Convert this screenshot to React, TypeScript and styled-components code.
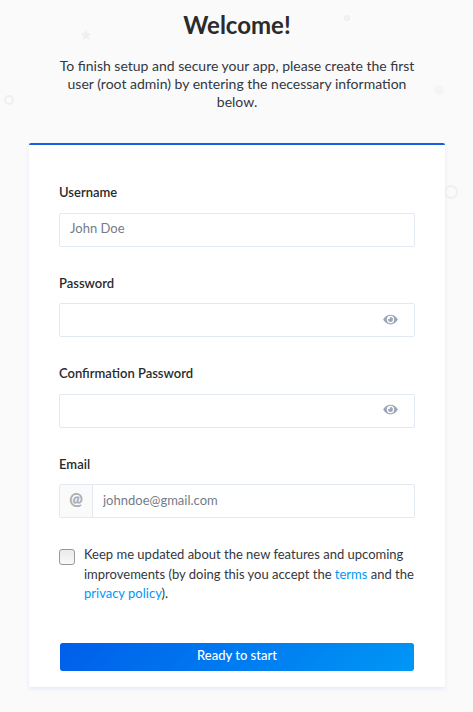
import React from "react";
import styled, { createGlobalStyle } from "styled-components";
import { FaEye } from "react-icons/fa";

const GlobalStyle = createGlobalStyle`
  *, *::before, *::after { box-sizing: border-box; }
  body {
    margin: 0;
    background: #fafafb;
    color: #333740;
    font-family: Lato, "Open Sans", sans-serif;
    font-size: 13px;
    line-height: 1.5;
  }
`;

const Page = styled.main`
  position: relative;
  display: flex;
  flex-direction: column;
  align-items: center;
  min-height: 100vh;
  padding: 7px 16px 24px 17px;
  overflow: hidden;
`;

const Decoration = styled.svg<{ $top: number; $left: number }>`
  position: absolute;
  top: ${(p) => p.$top}px;
  left: ${(p) => p.$left}px;
`;

const Header = styled.header`
  position: relative;
  width: 100%;
  max-width: 356px;
  text-align: center;
`;

const Title = styled.h1`
  margin: 0 0 14px;
  font-size: 24px;
  line-height: 36px;
  font-weight: 700;
  color: #292b2c;
`;

const Subtitle = styled.p`
  margin: 0;
  font-size: 14px;
  line-height: 18px;
  color: #333740;
`;

const Card = styled.form`
  position: relative;
  width: 100%;
  max-width: 416px;
  margin-top: 32px;
  padding: 38px 30px 15px;
  background: #fff;
  border-top: 2px solid #1c5de7;
  border-radius: 2px;
  box-shadow: 0 2px 4px #e3e9f3;
`;

const Field = styled.div`
  display: flex;
  flex-direction: column;
  margin-bottom: 27px;
`;

const Label = styled.label`
  margin-bottom: 10px;
  font-weight: 600;
  color: #292b2c;
`;

const Control = styled.div`
  display: flex;
  height: 34px;
  overflow: hidden;
  background: #fff;
  border: 1px solid #e3e9f3;
  border-radius: 2px;
  &:focus-within { border-color: #78caff; }
`;

const Addon = styled.span`
  display: flex;
  align-items: center;
  justify-content: center;
  width: 33px;
  padding-bottom: 4px;
  background: #fafafb;
  border-right: 1px solid #e3e9f3;
  color: #aaafb5;
  font-size: 16px;
  font-weight: 800;
`;

const Input = styled.input`
  flex: 1;
  min-width: 0;
  padding: 0 10px 3px;
  border: 0;
  outline: 0;
  background: transparent;
  color: #333740;
  font-family: inherit;
  font-size: 13px;
  &::placeholder { color: #757c87; opacity: 1; }
`;

const Reveal = styled.button`
  display: flex;
  align-items: center;
  justify-content: center;
  width: 48px;
  padding: 0 0 2px;
  border: 0;
  background: transparent;
  color: #9ea7b8;
  cursor: pointer;
  svg { width: 15px; height: 13px; }
`;

const Consent = styled.div`
  display: flex;
  align-items: flex-start;
  gap: 9px;
`;

const Checkbox = styled.input`
  flex: none;
  appearance: none;
  width: 16px;
  height: 16px;
  margin: 4px 0 0;
  border: 1px solid #999892;
  border-radius: 3px;
  background: linear-gradient(#eaeaea, #f9f9f9);
  &:checked { background: #1c5de7; }
`;

const ConsentLabel = styled.label`
  color: #333740;
`;

const Link = styled.a`
  color: #0097f7;
  text-decoration: none;
`;

const Submit = styled.button`
  display: block;
  width: 100%;
  height: 30px;
  margin-top: 38px;
  padding: 0 0 3px;
  border: 1px solid #fff;
  border-radius: 3px;
  background: linear-gradient(315deg, #0097f6 0%, #005eea 100%) padding-box;
  color: #fff;
  font-family: inherit;
  font-size: 13px;
  font-weight: 500;
  cursor: pointer;
`;

type TextFieldProps = {
  id: string;
  label: string;
  type: string;
  placeholder?: string;
  addon?: string;
};

function TextField({ id, label, type, placeholder, addon }: TextFieldProps) {
  const [shown, setShown] = React.useState(false);
  const secret = type === "password";
  return (
    <Field>
      <Label htmlFor={id}>{label}</Label>
      <Control>
        {addon && <Addon>{addon}</Addon>}
        <Input id={id} name={id} type={shown ? "text" : type} placeholder={placeholder} />
        {secret && (
          <Reveal type="button" aria-label={`Show ${label}`} onClick={() => setShown(!shown)}>
            <FaEye />
          </Reveal>
        )}
      </Control>
    </Field>
  );
}

export default function App() {
  return (
    <>
      <GlobalStyle />
      <Page>
        <Decoration $top={29} $left={80} width="12" height="12" viewBox="0 0 12 12" aria-hidden="true">
          <path d="M6 .5 7.6 4l3.9.4-2.9 2.6.8 3.9L6 9l-3.4 1.9.8-3.9L.5 4.4 4.4 4z" fill="#efeff0" />
        </Decoration>
        <Decoration $top={95} $left={4} width="10" height="10" viewBox="0 0 10 10" aria-hidden="true">
          <circle cx="5" cy="5" r="4" fill="none" stroke="#efeff0" strokeWidth="2" />
        </Decoration>
        <Decoration $top={15} $left={344} width="6" height="6" viewBox="0 0 6 6" aria-hidden="true">
          <circle cx="3" cy="3" r="2" fill="none" stroke="#efeff0" strokeWidth="2" />
        </Decoration>
        <Decoration $top={85} $left={434} width="10" height="10" viewBox="0 0 10 10" aria-hidden="true">
          <circle cx="5" cy="5" r="5" fill="#f5f5f7" />
        </Decoration>
        <Decoration $top={185} $left={444} width="14" height="14" viewBox="0 0 14 14" aria-hidden="true">
          <circle cx="7" cy="7" r="6" fill="none" stroke="#efeff0" strokeWidth="2" />
        </Decoration>

        <Header>
          <Title>Welcome!</Title>
          <Subtitle>
            To finish setup and secure your app, please create the first user (root admin) by entering the
            necessary information below.
          </Subtitle>
        </Header>

        <Card onSubmit={(e) => e.preventDefault()}>
          <TextField id="username" label="Username" type="text" placeholder="John Doe" />
          <TextField id="password" label="Password" type="password" />
          <TextField id="confirmPassword" label="Confirmation Password" type="password" />
          <TextField id="email" label="Email" type="email" placeholder="johndoe@gmail.com" addon="@" />
          <Consent>
            <Checkbox id="news" name="news" type="checkbox" />
            <ConsentLabel htmlFor="news">
              Keep me updated about the new features and upcoming improvements (by doing this you accept
              the <Link href="#terms">terms</Link> and the <Link href="#privacy">privacy policy</Link>).
            </ConsentLabel>
          </Consent>
          <Submit type="submit">Ready to start</Submit>
        </Card>
      </Page>
    </>
  );
}
